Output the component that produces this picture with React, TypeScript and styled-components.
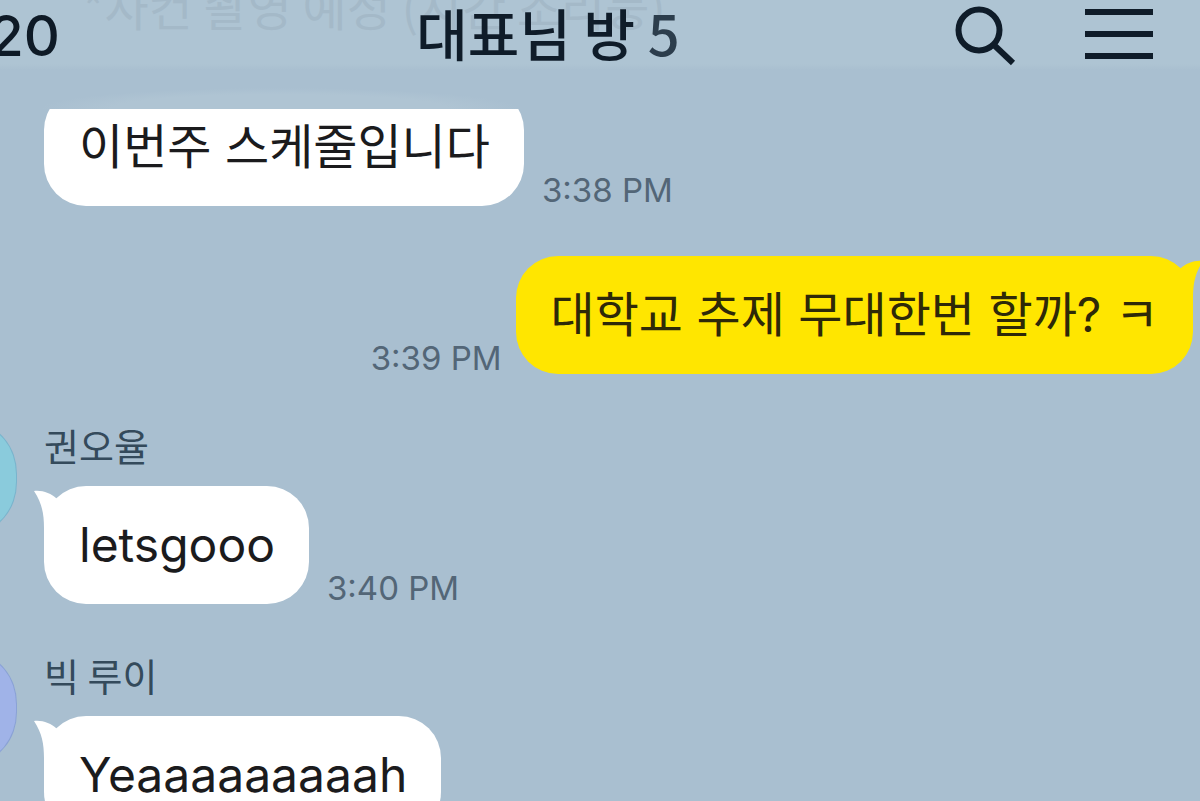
import React from 'react';
import styled, { createGlobalStyle } from 'styled-components';

const sans = `Inter, "Noto Sans CJK KR", sans-serif`;
const korean = `"Noto Sans CJK KR", sans-serif`;

const GlobalStyle = createGlobalStyle`
  * { box-sizing: border-box; }
  body { margin: 0; background: #a9bfd0; }
`;

const Screen = styled.div`
  display: flex;
  flex-direction: column;
  height: 100vh;
  overflow: hidden;
  background: #a9bfd0;
  font-family: ${sans};
`;

const Header = styled.header`
  position: relative;
  z-index: 1;
  display: grid;
  grid-template-columns: 4fr auto 5fr;
  align-items: start;
  flex: none;
  height: 109px;
  overflow: hidden;
  background:
    radial-gradient(closest-side, #afc4d3 70%, rgba(175, 196, 211, 0)) 40px 88px / 480px 42px no-repeat,
    linear-gradient(#aec4d3 0 64px, #a9bfd0 70px);
`;

const Ghost = styled.p`
  position: absolute;
  top: -27px;
  left: 82px;
  margin: 0;
  font: 400 48px/64px ${korean};
  color: #a4b9c8;
  white-space: nowrap;
`;

const BackLink = styled.a`
  position: relative;
  margin-left: -34px;
  font-size: 56px;
  font-weight: 500;
  line-height: 72px;
  color: #0e1a26;
  text-decoration: none;
`;

const Title = styled.h1`
  position: relative;
  margin: 0;
  font: 500 56px/64px ${korean};
  color: #0f1c29;
  white-space: nowrap;
`;

const Count = styled.span`
  color: #2c3d4c;
`;

const Actions = styled.div`
  position: relative;
  display: flex;
  justify-content: flex-end;
  gap: 68px;
  padding: 4px 47px 0 0;
`;

const IconButton = styled.button`
  display: flex;
  padding: 0;
  border: 0;
  background: none;
  color: #0f1c29;
`;

const Messages = styled.main`
  display: flex;
  flex-direction: column;
  gap: 50px;
  margin-top: -21px;
`;

const Message = styled.article<{ $mine?: boolean }>`
  display: flex;
  flex: none;
  justify-content: ${p => (p.$mine ? 'flex-end' : 'flex-start')};
  padding-right: 7px;
`;

const AvatarSlot = styled.div`
  flex: none;
  width: 100px;
  margin: 0 27px 0 -83px;
`;

const Avatar = styled.div<{ $color: string }>`
  height: 108px;
  border: 1px solid rgba(70, 110, 160, 0.25);
  border-radius: 42px / 50px;
  background: ${p => p.$color};
`;

const Name = styled.h2`
  margin: 0 0 20px;
  font: 400 38px/42px ${korean};
  color: #344a5b;
`;

const Line = styled.div<{ $mine?: boolean }>`
  display: flex;
  flex-direction: ${p => (p.$mine ? 'row-reverse' : 'row')};
  align-items: flex-end;
  gap: ${p => (p.$mine ? 14 : 18)}px;
`;

const Bubble = styled.p<{ $mine?: boolean }>`
  position: relative;
  margin: 0;
  padding: 27px 34px 27px 35px;
  border-radius: 42px;
  background: ${p => (p.$mine ? '#ffe600' : '#ffffff')};
  color: ${p => (p.$mine ? '#2e2908' : '#1b1b1d')};
  font-size: 48px;
  line-height: 64px;
  white-space: nowrap;
`;

const Tail = styled.svg<{ $mine?: boolean }>`
  position: absolute;
  top: 4px;
  ${p => (p.$mine ? 'right: -10px; transform: scaleX(-1);' : 'left: -10px;')}
  fill: ${p => (p.$mine ? '#ffe600' : '#ffffff')};
`;

const Time = styled.time`
  font-size: 33px;
  line-height: 32px;
  color: #536677;
  white-space: nowrap;
`;

type Entry = {
  text: string;
  time: string;
  name?: string;
  avatar?: string;
  mine?: boolean;
};

const entries: Entry[] = [
  { text: '이번주 스케줄입니다', time: '3:38 PM' },
  { text: '대학교 추제 무대한번 할까? ㅋ', time: '3:39 PM', mine: true },
  { text: 'letsgooo', time: '3:40 PM', name: '권오율', avatar: '#8acbdc' },
  { text: 'Yeaaaaaaaaah', time: '3:40 PM', name: '빅 루이', avatar: '#a0b3e8' },
];

function ChatMessage({ text, time, name, avatar, mine }: Entry) {
  return (
    <Message $mine={mine}>
      {!mine && <AvatarSlot>{avatar && <Avatar $color={avatar} />}</AvatarSlot>}
      <div>
        {name && <Name>{name}</Name>}
        <Line $mine={mine}>
          <Bubble $mine={mine}>
            {(name || mine) && (
              <Tail $mine={mine} width="34" height="38" viewBox="0 0 34 38" aria-hidden="true">
                <path d="M0 1C8 0 17 3 23 9L34 12V28L10 38C10 24 8 13 0 1Z" />
              </Tail>
            )}
            {text}
          </Bubble>
          <Time>{time}</Time>
        </Line>
      </div>
    </Message>
  );
}

export default function App() {
  return (
    <Screen>
      <GlobalStyle />
      <Header>
        <Ghost>*사컨 촬영 예정 (시간 조리뭉)</Ghost>
        <BackLink href="#chats">120</BackLink>
        <Title>
          대표님 방 <Count>5</Count>
        </Title>
        <Actions>
          <IconButton aria-label="Search">
            <svg width="64" height="64" viewBox="0 0 64 64" fill="none" stroke="currentColor" strokeWidth="6">
              <circle cx="26" cy="26" r="20.5" />
              <path d="M41 41L60 59" />
            </svg>
          </IconButton>
          <IconButton aria-label="Menu">
            <svg width="68" height="64" viewBox="0 0 68 64" fill="none" stroke="currentColor" strokeWidth="6">
              <path d="M0 8H68M0 30H68M0 52H68" />
            </svg>
          </IconButton>
        </Actions>
      </Header>
      <Messages>
        {entries.map(entry => (
          <ChatMessage key={entry.text} {...entry} />
        ))}
      </Messages>
    </Screen>
  );
}
